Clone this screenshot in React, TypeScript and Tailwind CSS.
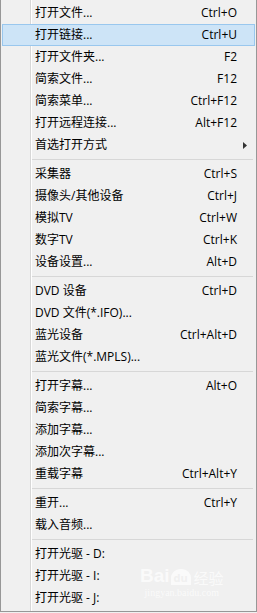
import React from 'react';

type Item = { label: string; shortcut?: string; sub?: boolean; active?: boolean };

const groups: Item[][] = [
  [
    { label: '打开文件...', shortcut: 'Ctrl+O' },
    { label: '打开链接...', shortcut: 'Ctrl+U', active: true },
    { label: '打开文件夹...', shortcut: 'F2' },
    { label: '简索文件...', shortcut: 'F12' },
    { label: '简索菜单...', shortcut: 'Ctrl+F12' },
    { label: '打开远程连接...', shortcut: 'Alt+F12' },
    { label: '首选打开方式', sub: true },
  ],
  [
    { label: '采集器', shortcut: 'Ctrl+S' },
    { label: '摄像头/其他设备', shortcut: 'Ctrl+J' },
    { label: '模拟TV', shortcut: 'Ctrl+W' },
    { label: '数字TV', shortcut: 'Ctrl+K' },
    { label: '设备设置...', shortcut: 'Alt+D' },
  ],
  [
    { label: 'DVD 设备', shortcut: 'Ctrl+D' },
    { label: 'DVD 文件(*.IFO)...' },
    { label: '蓝光设备', shortcut: 'Ctrl+Alt+D' },
    { label: '蓝光文件(*.MPLS)...' },
  ],
  [
    { label: '打开字幕...', shortcut: 'Alt+O' },
    { label: '简索字幕...' },
    { label: '添加字幕...' },
    { label: '添加次字幕...' },
    { label: '重载字幕', shortcut: 'Ctrl+Alt+Y' },
  ],
  [
    { label: '重开...', shortcut: 'Ctrl+Y' },
    { label: '载入音频...' },
  ],
  [
    { label: '打开光驱 - D:' },
    { label: '打开光驱 - I:' },
    { label: '打开光驱 - J:' },
  ],
];

const MenuRow = ({ item }: { item: Item }) => (
  <div
    className={`relative flex h-[22px] items-center border ${
      item.active ? 'border-[#99c7ee] bg-[#cde4f7]' : 'border-transparent'
    }`}
  >
    <div className="w-[32px] shrink-0" />
    <span className="flex-1 whitespace-nowrap">{item.label}</span>
    {item.shortcut && <span className="mr-[17px] whitespace-nowrap">{item.shortcut}</span>}
    {item.sub && (
      <svg className="absolute right-[7px] top-[7px]" width="4" height="7" viewBox="0 0 4 7">
        <path d="M0 0 L4 3.5 L0 7 Z" fill="#333" />
      </svg>
    )}
  </div>
);

export default function App() {
  return (
    <div
      className="relative h-[613px] w-[257px] overflow-hidden bg-[#f0f0f0] text-[12px] text-black"
      style={{ fontFamily: '"Segoe UI", "Open Sans", "Noto Sans CJK SC", sans-serif' }}
    >
      <div className="relative h-[612px] border-x border-b border-[#979797] bg-[#f0f0f0] pt-[2px] pl-[1px] pr-[1px]">
        {/* icon column divider */}
        <div className="absolute left-[29px] top-0 bottom-0 w-px bg-[#d7d7d7]" />
        <div className="absolute left-[30px] top-0 bottom-0 w-px bg-white" />
        {groups.map((g, gi) => (
          <div key={gi}>
            {gi > 0 && (
              <div className="flex h-[7px] items-center pl-[29px] pr-[2px]">
                <div className="h-px w-full bg-[#d7d7d7]" />
              </div>
            )}
            {g.map((item) => (
              <MenuRow key={item.label} item={item} />
            ))}
          </div>
        ))}
      </div>

      {/* watermark */}
      <div className="pointer-events-none absolute left-[140px] top-[566px] flex flex-col items-center text-white opacity-70">
        <div className="flex items-end gap-[1px]">
          <span className="text-[19px] font-bold leading-none" style={{ fontFamily: '"Liberation Sans", sans-serif' }}>
            Bai
          </span>
          <span className="relative flex h-[16px] w-[20px] items-center justify-center rounded-t-[9px] bg-white text-[11px] font-bold leading-none text-[#f0f0f0]">
            du
          </span>
          <span className="ml-[2px] text-[15px] leading-none" style={{ fontFamily: '"Noto Sans CJK SC", sans-serif' }}>
            经验
          </span>
        </div>
        <span className="mt-[3px] text-[10px] leading-none" style={{ fontFamily: '"Liberation Serif", serif' }}>
          jingyan.baidu.com
        </span>
      </div>
    </div>
  );
}
